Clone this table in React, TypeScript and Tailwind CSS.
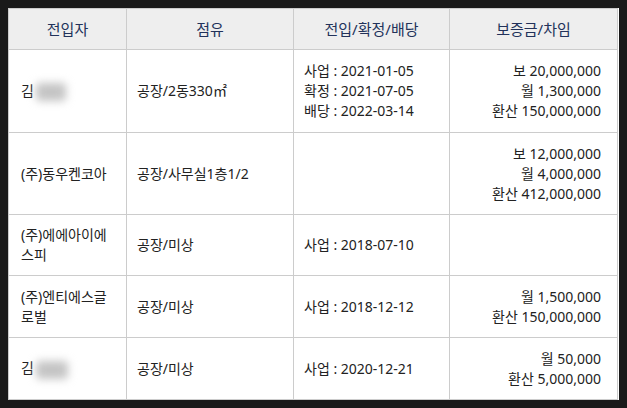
import React from 'react';

type Row = {
  name: React.ReactNode;
  use: string;
  dates: string[];
  money: string[];
  h: string;
};

const Blur = ({ w }: { w: string }) => (
  <span className={`inline-block align-middle h-[18px] ${w} bg-[#c4c4c4] blur-[4px] rounded-sm ml-[2px]`} />
);

const rows: Row[] = [
  {
    name: (
      <span className="whitespace-nowrap">
        김<Blur w="w-[30px]" />
      </span>
    ),
    use: '공장/2동330㎡',
    dates: ['사업 : 2021-01-05', '확정 : 2021-07-05', '배당 : 2022-03-14'],
    money: ['보 20,000,000', '월 1,300,000', '환산 150,000,000'],
    h: 'h-[83px]',
  },
  {
    name: <span className="whitespace-nowrap">(주)동우켄코아</span>,
    use: '공장/사무실1층1/2',
    dates: [],
    money: ['보 12,000,000', '월 4,000,000', '환산 412,000,000'],
    h: 'h-[82px]',
  },
  {
    name: (
      <>
        (주)에에아이에
        <br />
        스피
      </>
    ),
    use: '공장/미상',
    dates: ['사업 : 2018-07-10'],
    money: [],
    h: 'h-[61px]',
  },
  {
    name: (
      <>
        (주)엔티에스글
        <br />
        로벌
      </>
    ),
    use: '공장/미상',
    dates: ['사업 : 2018-12-12'],
    money: ['월 1,500,000', '환산 150,000,000'],
    h: 'h-[62px]',
  },
  {
    name: (
      <span className="whitespace-nowrap">
        김<Blur w="w-[32px]" />
      </span>
    ),
    use: '공장/미상',
    dates: ['사업 : 2020-12-21'],
    money: ['월 50,000', '환산 5,000,000'],
    h: 'h-[62px]',
  },
];

export default function App() {
  return (
    <div
      className="w-[627px] h-[408px] bg-[#1a1a1a] pt-2 pl-2"
      style={{ fontFamily: '"Noto Sans", "Noto Sans CJK KR", sans-serif' }}
    >
      <div className="w-[611px] bg-white">
        <table className="w-[609px] table-fixed border-collapse text-[14px] leading-[20px] text-[#222]">
          <colgroup>
            <col className="w-[118px]" />
            <col className="w-[167px]" />
            <col className="w-[156px]" />
            <col className="w-[168px]" />
          </colgroup>
          <thead>
            <tr className="h-[41px] bg-[#eeeeee] text-[15px] text-[#22325a]">
              <th className="border border-[#cccccc] font-normal">전입자</th>
              <th className="border border-[#cccccc] font-normal">점유</th>
              <th className="border border-[#cccccc] font-normal">전입/확정/배당</th>
              <th className="border border-[#cccccc] font-normal">보증금/차임</th>
            </tr>
          </thead>
          <tbody>
            {rows.map((r, i) => (
              <tr key={i} className={r.h}>
                <td className="border border-[#cccccc] pl-3 pr-1 align-middle">{r.name}</td>
                <td className="border border-[#cccccc] px-[10px] align-middle">{r.use}</td>
                <td className="border border-[#cccccc] px-[10px] align-middle">
                  {r.dates.map((d) => (
                    <div key={d}>{d}</div>
                  ))}
                </td>
                <td className="border border-[#cccccc] pl-2 pr-4 text-right align-middle">
                  {r.money.map((m) => (
                    <div key={m}>{m}</div>
                  ))}
                </td>
              </tr>
            ))}
          </tbody>
        </table>
      </div>
    </div>
  );
}
